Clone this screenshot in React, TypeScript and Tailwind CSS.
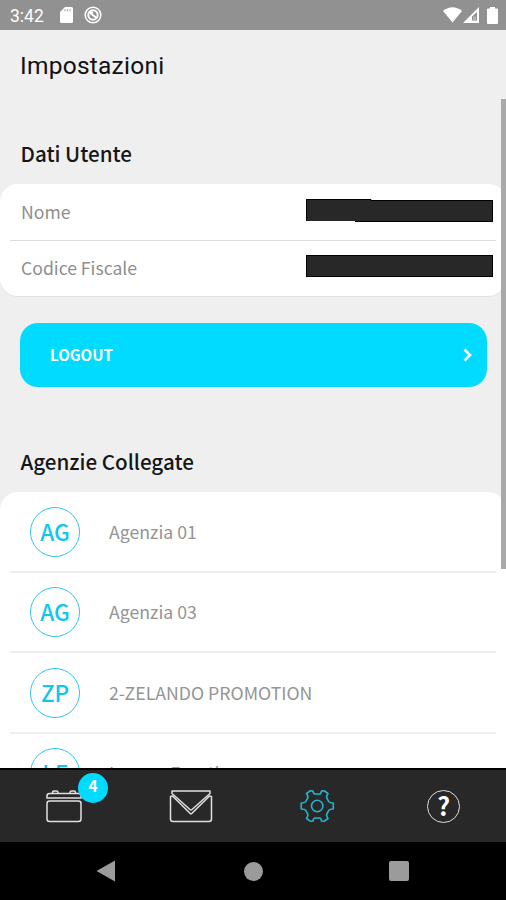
import React from 'react';

interface Agenzia {
    id: number;
    sigla: string;
    nome: string;
}

const agenzie: Agenzia[] = [
    { id: 1, sigla: 'AG', nome: 'Agenzia 01' },
    { id: 2, sigla: 'AG', nome: 'Agenzia 03' },
    { id: 3, sigla: 'ZP', nome: '2-ZELANDO PROMOTION' },
    { id: 4, sigla: 'LF', nome: 'Lorena Frontino' },
];

const StatusBar: React.FC = () => (
    <div className="flex h-[30px] shrink-0 items-center bg-[#919191] pr-[8px] pl-[10px] text-white">
        <span className="w-[50px] pt-px font-[Roboto] text-[17.5px] leading-[30px]">3:42</span>
        <svg className="h-[16px] w-[13px]" viewBox="0 0 13 16" fill="currentColor">
            <path d="M5 0h6.5A1.5 1.5 0 0 1 13 1.5V14.5A1.5 1.5 0 0 1 11.5 16H1.5A1.5 1.5 0 0 1 0 14.5V5z" />
            <path d="M5 2v2.5M7.5 2v2.5M10 2v2.5" stroke="#b5b5b5" strokeWidth="1.2" />
        </svg>
        <svg className="ml-[11px] h-[18px] w-[18px]" viewBox="0 0 18 18" fill="none" stroke="currentColor">
            <circle cx="9" cy="9" r="7.8" strokeWidth="1.5" />
            <circle cx="9" cy="9" r="4.7" strokeWidth="2" />
            <path d="M6 7l6 4.5M6 6l3 1" strokeWidth="2" />
        </svg>
        <svg className="ml-auto h-[16px] w-[19px]" viewBox="0 0 19 16" fill="currentColor">
            <path d="M0 4Q9.5 -3.5 19 4L9.5 15.5z" />
        </svg>
        <svg className="ml-[1px] h-[16px] w-[16px]" viewBox="0 0 16 16">
            <path d="M16 0V16H0z" fill="currentColor" />
            <path d="M14 5V13.5H9V9.5z" fill="#919191" />
            <path d="M10 9.5h3v4h-3z" fill="#b5b5b5" />
        </svg>
        <svg className="ml-[8px] h-[17px] w-[11px]" viewBox="0 0 11 17" fill="currentColor">
            <path d="M3 0h5v1.5h2q1 0 1 1V16q0 1-1 1H1q-1 0-1-1V2.5q0-1 1-1h2z" />
        </svg>
    </div>
);

const DatiUtente: React.FC = () => (
    <div className="flex h-[112px] flex-col rounded-[18px] bg-white text-[17.6px] text-[#8e8e8e] shadow-[0_1px_1px_rgba(0,0,0,0.05)]">
        <div className="mx-[10px] flex h-[57px] items-center justify-between border-b border-[#dcdcdc] pr-[3px] pl-[11px]">
            <span className="mb-[1px] leading-[24px]">Nome</span>
            <svg className="mb-[5px] h-[24px] w-[187px]" viewBox="0 0 187 24">
                <path d="M0 1H65V2H187V24H49V23H0z" fill="#282828" />
                <path d="M0.5 23V1.5H65V2.5H186.5V23.5H49" fill="none" stroke="#000" />
            </svg>
        </div>
        <div className="mx-[10px] flex h-[55px] items-center justify-between pr-[3px] pl-[11px]">
            <span className="mb-[1px] leading-[24px]">Codice Fiscale</span>
            <div className="mb-[5px] h-[22px] w-[187px] border border-black bg-[#282828]" />
        </div>
    </div>
);

const ListaAgenzie: React.FC = () => (
    <div className="rounded-t-[18px] bg-white">
        {agenzie.map((agenzia) => (
            <div
                key={agenzia.id}
                className="mx-[10px] flex h-[80.5px] items-center border-b-2 border-[#eeeeee] pt-px pl-[20px]"
            >
                <div className="flex h-[50px] w-[50px] items-center justify-center rounded-full border-[1.5px] border-[#2cc5f2] text-[22.5px] leading-[46px] font-medium text-[#10c5f0]">
                    <span className="-mt-[2px]">{agenzia.sigla}</span>
                </div>
                <span className="-mt-[2px] ml-[29px] text-[17.7px] leading-[24px] text-[#949494]">{agenzia.nome}</span>
            </div>
        ))}
    </div>
);

const TabBar: React.FC = () => (
    <div className="-mr-[1px] flex h-[74px] shrink-0 border-t-2 border-black bg-[#282828] pl-[1px] text-[#e0e0e0]">
        <div className="relative flex flex-1 items-center justify-center">
            <svg className="h-[34px] w-[38px]" viewBox="0 0 38 34" fill="none" stroke="currentColor" strokeWidth="1.5">
                <rect x="2" y="12" width="34" height="20.5" rx="2.5" />
                <path d="M2 9V7Q2 4.5 4.5 4.5H33.5Q36 4.5 36 7V9z" />
                <path d="M7.5 4.5V3.5Q7.5 2 9 2H11.5Q13 2 13 3.5V4.5M25 4.5V3.5Q25 2 26.5 2H29Q30.5 2 30.5 3.5V4.5" />
            </svg>
            <div className="absolute top-[3px] left-[77px] flex h-[30px] w-[30px] justify-center rounded-full bg-[#00dbff] text-[16px] leading-[25px] font-bold text-white">
                4
            </div>
        </div>
        <div className="flex flex-1 items-center justify-center">
            <svg className="h-[34px] w-[44px]" viewBox="0 0 44 34" fill="none" stroke="currentColor" strokeWidth="1.5" strokeLinejoin="round">
                <path d="M3 2H41V4.5L23 20.5Q22 21.3 21 20.5L3 4.5z" />
                <path d="M1.5 7.5V30Q1.5 32.5 4 32.5H40Q42.5 32.5 42.5 30V7.5L40.5 7L23 24.3Q22 25 21 24.3L3.5 7z" />
            </svg>
        </div>
        <div className="flex flex-1 items-center justify-center">
            <svg className="h-[36px] w-[36px] text-[#23b5cf]" viewBox="0 0 36 36" fill="none" stroke="currentColor" strokeWidth="1.6" strokeLinejoin="round">
                <path d="M14 3Q14.5 6 16 6H20.5Q22 6 22.5 3L25 2.7L29 5.5Q27 8.5 27.8 10L29.8 13.6Q30.6 14.8 34.3 15V21Q30.6 21.2 29.8 22.4L27.8 26Q27 27.5 29 30.5L25 33.3L22.5 33Q22 30 20.5 30H16Q14.5 30 14 33L11.5 33.3L7.5 30.5Q9.5 27.5 8.7 26L6.7 22.4Q5.9 21.2 2.2 21V15Q5.9 14.8 6.7 13.6L8.7 10Q9.5 8.5 7.5 5.5L11.5 2.7z" />
                <circle cx="18.2" cy="18" r="5.7" />
            </svg>
        </div>
        <div className="flex flex-1 items-center justify-center">
            <div className="flex h-[33px] w-[33px] items-center justify-center rounded-full border-[1.5px] border-[#dddddd] text-[25px] leading-[30px] font-bold text-white">
                <span className="-mt-[2px]">?</span>
            </div>
        </div>
    </div>
);

const NavBar: React.FC = () => (
    <div className="flex h-[58px] shrink-0 items-center bg-black pl-[96px] text-[#9b9b9b]">
        <svg className="h-[22px] w-[19px]" viewBox="0 0 19 22" fill="currentColor">
            <path d="M19 0.5V21.5L0.5 11z" />
        </svg>
        <div className="ml-[129px] h-[19px] w-[19px] rounded-full bg-current" />
        <div className="ml-[126px] h-[20px] w-[20px] rounded-[2px] bg-current" />
    </div>
);

const App: React.FC = () => {
    return (
        <div className="flex h-[900px] w-[506px] flex-col overflow-hidden bg-[#efefef] font-['Noto_Sans_CJK_SC',sans-serif]">
            <StatusBar />
            <main className="relative flex-1 overflow-hidden">
                <h1 className="mt-[20px] ml-[20px] font-[Roboto] text-[24.5px] leading-[32px] tracking-[0.25px] text-[#111111]">
                    Impostazioni
                </h1>
                <h2 className="mt-[55px] ml-[20.5px] text-[20.6px] leading-[32px] font-medium text-[#161616]">Dati Utente</h2>
                <div className="mt-[15px]">
                    <DatiUtente />
                </div>
                <button className="mt-[27px] ml-[20px] flex h-[64px] w-[467px] items-center justify-between rounded-[18px] bg-[#00dbff] pr-[15px] pl-[30px] text-[15.1px] font-bold text-white">
                    <span className="-mt-[2px]">LOGOUT</span>
                    <svg className="h-[14px] w-[9px]" viewBox="0 0 9 14" fill="none" stroke="currentColor" strokeWidth="2.6">
                        <path d="M1.5 1.5L7 7L1.5 12.5" />
                    </svg>
                </button>
                <h2 className="mt-[58px] ml-[20.5px] text-[20.6px] leading-[32px] font-medium text-[#161616]">Agenzie Collegate</h2>
                <div className="mt-[15px]">
                    <ListaAgenzie />
                </div>
                {/* scrollbar */}
                <div className="absolute top-[69px] right-0 h-[470px] w-[5px] bg-[#a9a9a9]" />
            </main>
            <TabBar />
            <NavBar />
        </div>
    );
};

export default App;
